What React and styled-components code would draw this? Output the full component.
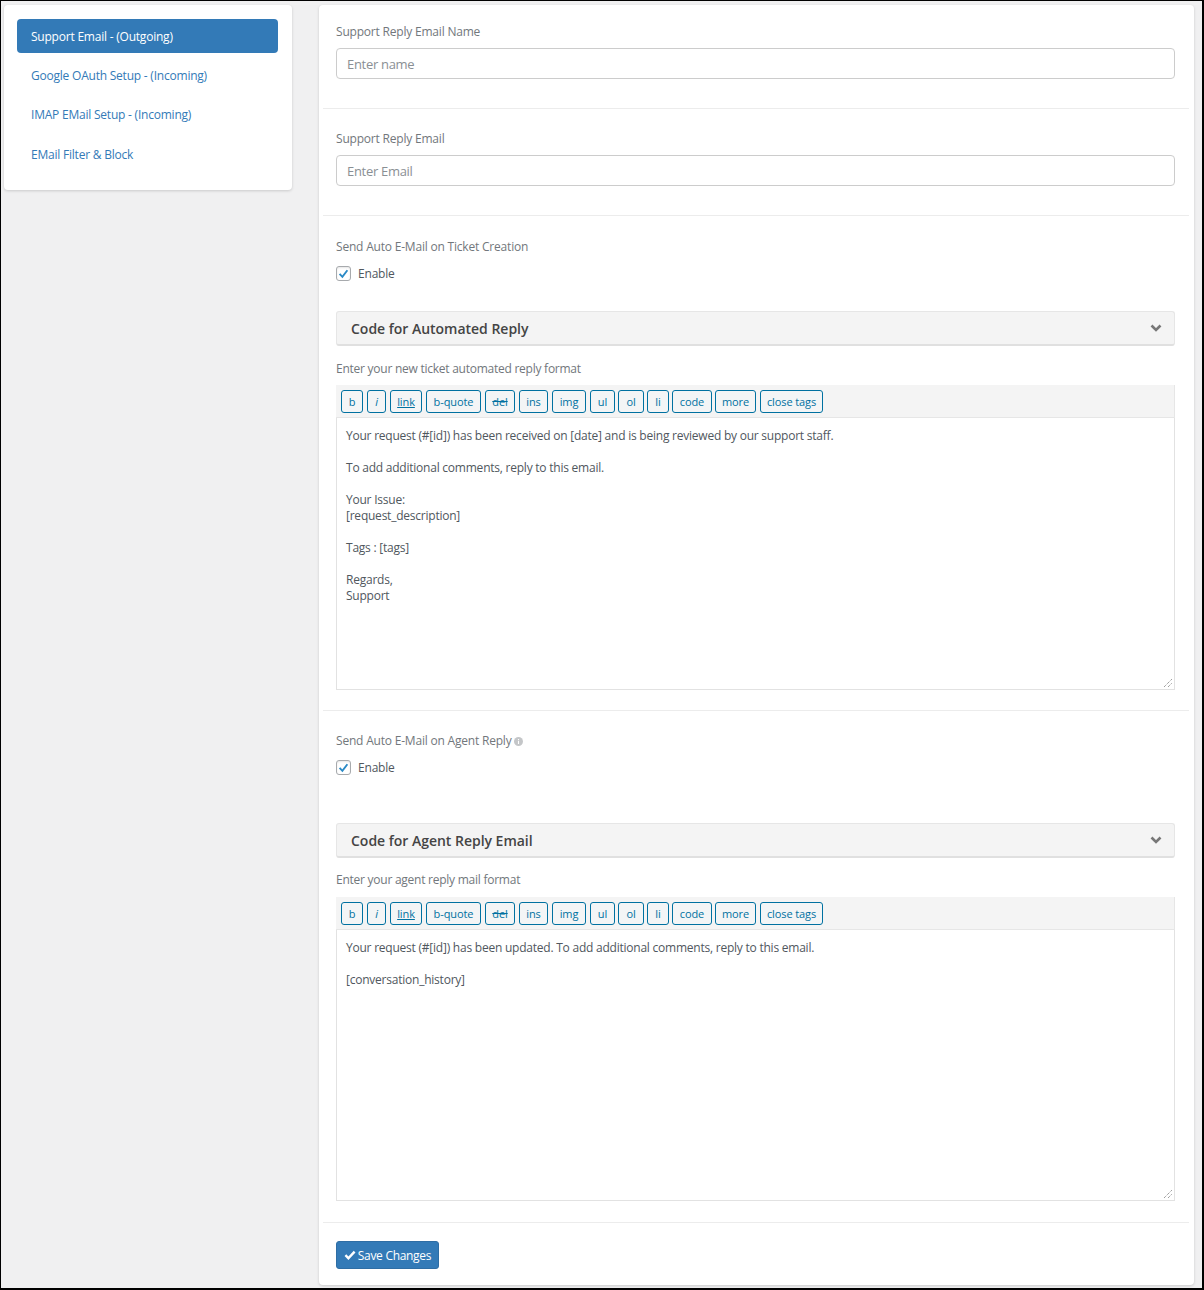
import React from "react";
import styled, { createGlobalStyle } from "styled-components";

const Global = createGlobalStyle`
  html, body { margin: 0; padding: 0; }
  body { font-family: "Open Sans", "Noto Sans", sans-serif; font-size: 12px; color: #444; }
  * { box-sizing: border-box; }
`;
const Frame = styled.div`
  width: 1204px; height: 1290px; background: #f0f0f1;
  border-style: solid; border-color: #000; border-width: 1px 2px 2px 1px;
  display: grid; grid-template-columns: 288px 875px; column-gap: 27px;
  padding: 4px 0 0 3px; align-items: start; overflow: hidden;
`;
const Side = styled.nav`
  background: #fff; border-radius: 4px; height: 185px; padding: 14px 14px 0 13px;
  box-shadow: 0 1px 3px rgba(0,0,0,.16);
  display: flex; flex-direction: column;
`;
const NavItem = styled.a`
  height: ${p => p.$h}px; display: flex; align-items: center; padding-left: 14px; border-radius: 4px;
  font-size: 12px; letter-spacing: -.22px; margin-bottom: ${p => p.$mb || 0}px;
  color: ${p => (p.$active ? "#fff" : "#337ab7")};
  background: ${p => (p.$active ? "#337ab7" : "transparent")};
`;
const Main = styled.main`
  background: #fff; border-radius: 4px; height: 1280px; padding: 0 5px 0 4px;
  box-shadow: 0 1px 3px rgba(0,0,0,.16);
`;
const Section = styled.section`
  height: ${p => p.$h}px; padding: ${p => p.$top}px 14px 0 13px; border-bottom: 1px solid #ececec;
  &:last-child { border-bottom: 0; }
`;
const Label = styled.div`
  font-size: 12px; line-height: 16px; color: #72777c; letter-spacing: -.2px;
  display: flex; align-items: center; gap: 3px;
`;
const Input = styled.div`
  height: 31px; margin-top: 8px; border: 1px solid #ccc; border-radius: 4px;
  padding-left: 10px; display: flex; align-items: center; color: #8a8f94;
  font-size: 13px; letter-spacing: -.3px;
`;
const CheckRow = styled.label`
  display: flex; align-items: center; gap: 7px; height: 16px; margin-top: 10px;
  font-size: 12px; color: #50575e; letter-spacing: -.2px;
`;
const CheckBox = styled.span`
  width: 15px; height: 15px; border: 1px solid #a7aaad; border-radius: 3px; background: #fff;
  box-shadow: inset 0 1px 2px rgba(0,0,0,.1);
  display: flex; align-items: center; justify-content: center;
`;
const Accordion = styled.div`
  height: 35px; margin-top: ${p => p.$mt}px; background: #f4f4f4; border-radius: 3px;
  border: 1px solid #e6e6e6; border-bottom: 2px solid #e0e0e0;
  display: flex; align-items: center; justify-content: space-between; padding: 0 12px 0 14px;
`;
const AccTitle = styled.h3`
  margin: 0; font-size: 14px; font-weight: 600; color: #444; letter-spacing: -.02px;
`;
const Hint = styled.div`
  font-size: 12px; line-height: 16px; margin-top: ${p => p.$mt}px; color: #72777c; letter-spacing: -.25px;
`;
const Toolbar = styled.div`
  height: 33px; margin-top: ${p => p.$mt}px; background: #f4f4f4; padding: 5px 5px 0;
  border: solid #e6e6e6; border-width: 0 1px 1px 0; display: flex;
`;
const TBtn = styled.span`
  width: ${p => p.$w}px; height: 23px; margin-right: ${p => p.$mr}px; flex: none;
  border: 1px solid #0071a1; border-radius: 3px; background: #f3f5f6; color: #0071a1;
  font-size: 11px; letter-spacing: -.1px; display: flex; align-items: center; justify-content: center;
  font-style: ${p => (p.$i ? "italic" : "normal")};
  text-decoration: ${p => p.$deco || "none"};
`;
const Area = styled.div`
  height: ${p => p.$h}px; border: solid #e2e2e2; border-width: 0 1px 1px 1px; padding: 10px 9px 0;
  position: relative; font-size: 12px; line-height: 16px; color: #50575e; letter-spacing: -.23px; white-space: pre-line;
`;
const Grip = styled.svg`
  position: absolute; right: 1px; bottom: 1px; width: 10px; height: 10px;
`;
const SaveBtn = styled.button`
  width: 103px; height: 28px; padding: 0; background: #337ab7; border: 1px solid #2e6da4; border-radius: 3px;
  color: #fff; font: 12px "Open Sans", sans-serif; letter-spacing: -.3px;
  display: flex; align-items: center; justify-content: center; gap: 2px;
`;

const btns = [
  ["b", 22, 4], ["i", 19, 4, { $i: true }], ["link", 32, 4, { $deco: "underline" }], ["b-quote", 55, 4],
  ["del", 30, 4, { $deco: "line-through" }], ["ins", 29, 4], ["img", 34, 4], ["ul", 25, 3], ["ol", 26, 3],
  ["li", 22, 3], ["code", 40, 3], ["more", 41, 4], ["close tags", 63, 0],
];

const Tools = ({ mt }) => (
  <Toolbar $mt={mt}>
    {btns.map(([t, w, mr, extra]) => <TBtn key={t} $w={w} $mr={mr} {...extra}>{t}</TBtn>)}
  </Toolbar>
);
const Check = () => (
  <CheckRow>
    <CheckBox>
      <svg width="13" height="13" viewBox="0 0 13 13"><path d="M2.6 6.8l2.8 3 5-6.6" fill="none" stroke="#2b8ac6" strokeWidth="1.9" /></svg>
    </CheckBox>
    Enable
  </CheckRow>
);
const Chevron = () => (
  <svg width="12" height="9" viewBox="0 0 12 9"><path d="M1.5 1.5L6 6l4.5-4.5" fill="none" stroke="#777" strokeWidth="2.6" /></svg>
);
const Resize = () => (
  <Grip viewBox="0 0 10 10"><path d="M1 9l8-8M5 9l4-4" stroke="#777" strokeWidth="1" strokeDasharray="1 1" /></Grip>
);

export default function App() {
  return (
    <Frame>
      <Global />
      <Side>
        <NavItem $active $h={34} $mb={3}>Support Email - (Outgoing)</NavItem>
        <NavItem $h={39}>Google OAuth Setup - (Incoming)</NavItem>
        <NavItem $h={39}>IMAP EMail Setup - (Incoming)</NavItem>
        <NavItem $h={40}>EMail Filter &amp; Block</NavItem>
      </Side>
      <Main>
        <Section $h={104} $top={19}>
          <Label>Support Reply Email Name</Label>
          <Input>Enter name</Input>
        </Section>
        <Section $h={107} $top={22}>
          <Label>Support Reply Email</Label>
          <Input>Enter Email</Input>
        </Section>
        <Section $h={495} $top={23}>
          <Label>Send Auto E-Mail on Ticket Creation</Label>
          <Check />
          <Accordion $mt={30}><AccTitle>Code for Automated Reply</AccTitle><Chevron /></Accordion>
          <Hint $mt={15}>Enter your new ticket automated reply format</Hint>
          <Tools mt={8} />
          <Area $h={272}>{`Your request (#[id]) has been received on [date] and is being reviewed by our support staff.

To add additional comments, reply to this email.

Your Issue:
[request_description]

Tags : [tags]

Regards,
Support`}<Resize /></Area>
        </Section>
        <Section $h={512} $top={22}>
          <Label>Send Auto E-Mail on Agent Reply
            <svg width="9" height="9" viewBox="0 0 9 9"><circle cx="4.5" cy="4.5" r="4.5" fill="#c4c6c8" /><path d="M4.5 2v.9M4.5 3.8V7" stroke="#fff" strokeWidth="1.1" /></svg>
          </Label>
          <Check />
          <Accordion $mt={48}><AccTitle>Code for Agent Reply Email</AccTitle><Chevron /></Accordion>
          <Hint $mt={14}>Enter your agent reply mail format</Hint>
          <Tools mt={9} />
          <Area $h={271}>{`Your request (#[id]) has been updated. To add additional comments, reply to this email.

[conversation_history]`}<Resize /></Area>
        </Section>
        <Section $h={61} $top={18}>
          <SaveBtn>
            <svg width="12" height="10" viewBox="0 0 12 10"><path d="M1.4 5.2l3 3 6.2-6.6" fill="none" stroke="#fff" strokeWidth="2.4" /></svg>
            Save Changes
          </SaveBtn>
        </Section>
      </Main>
    </Frame>
  );
}
